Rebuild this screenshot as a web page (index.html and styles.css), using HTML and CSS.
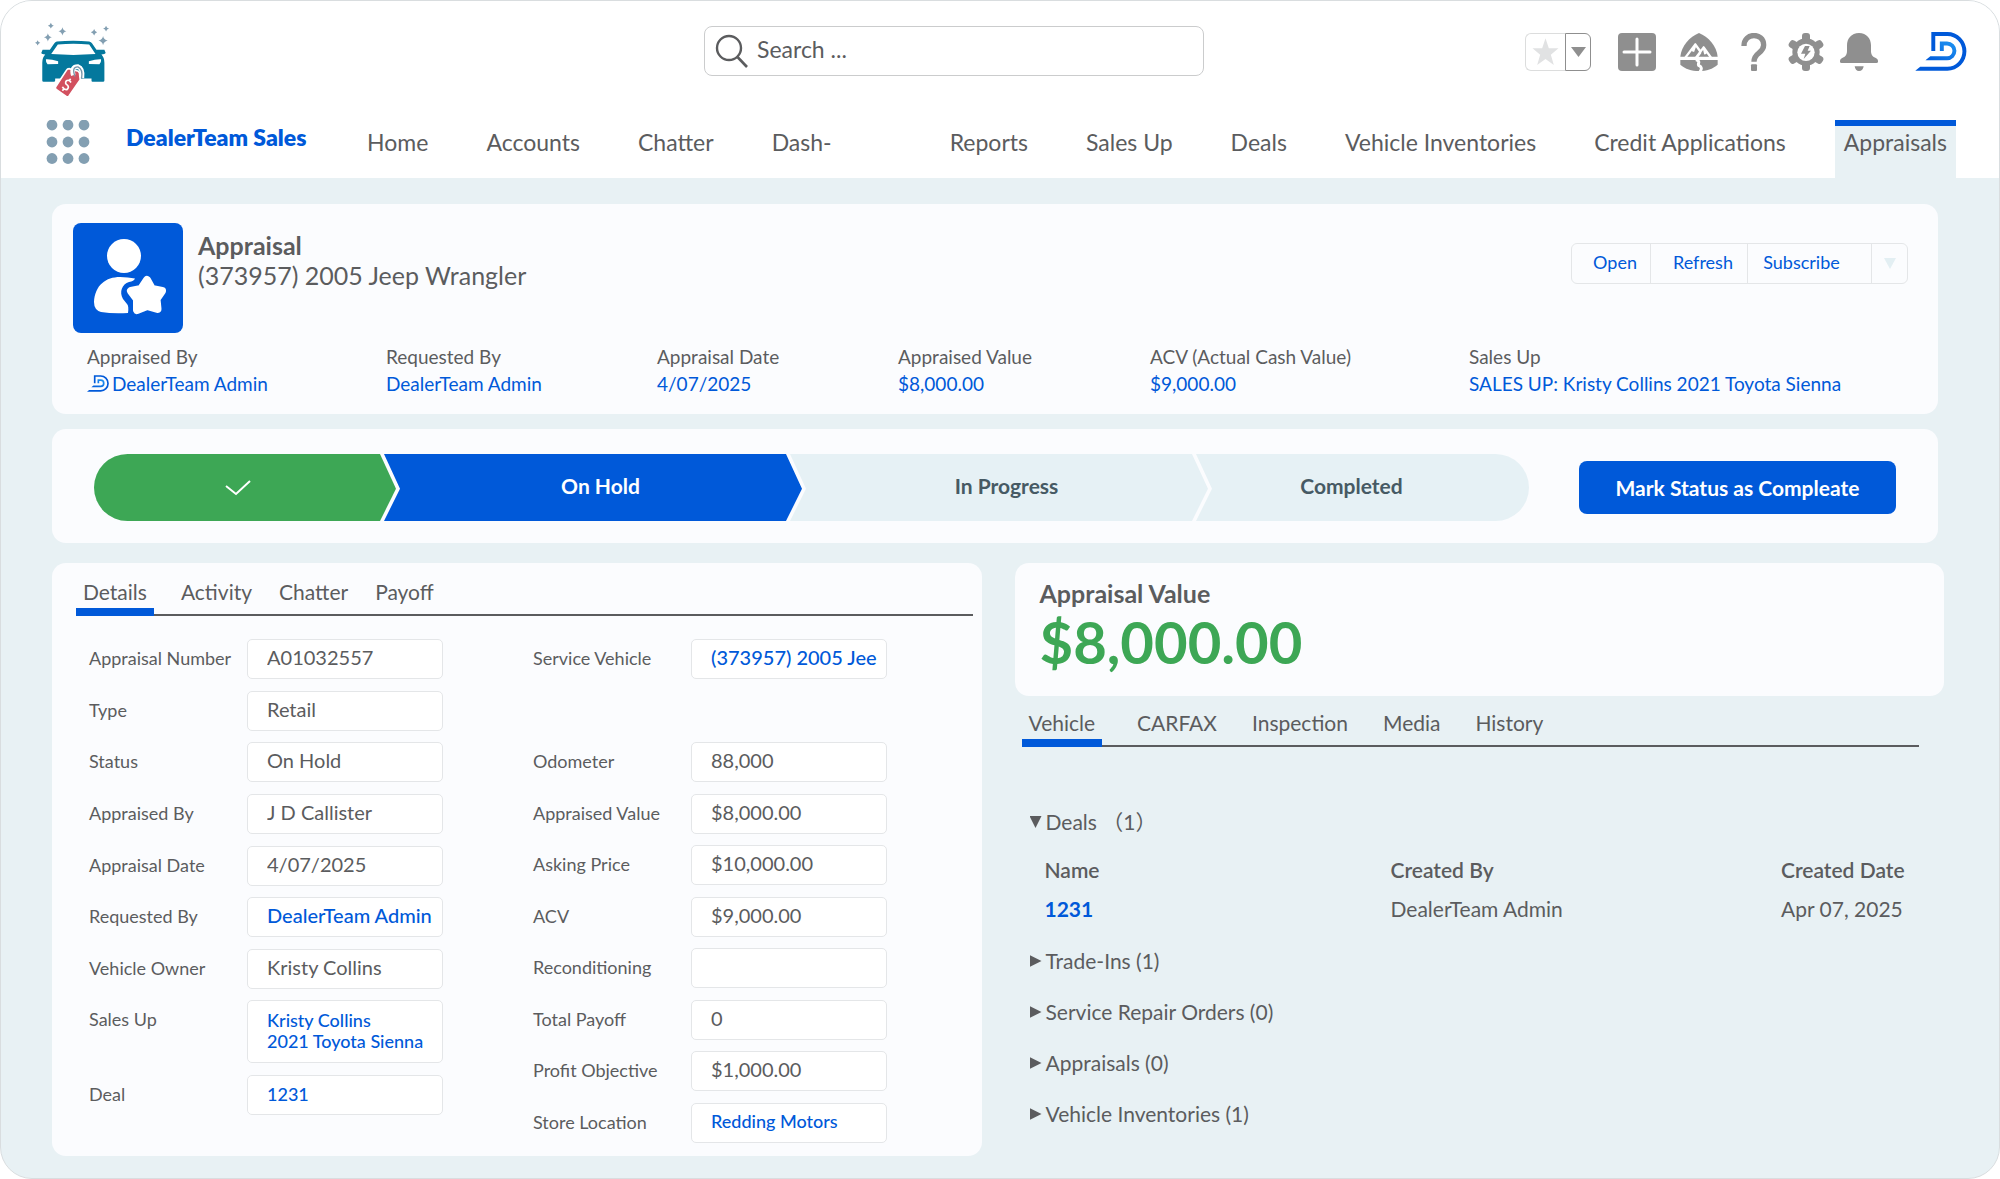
FILE: index.html
```html
<!DOCTYPE html>
<html lang="en">
<head>
<meta charset="utf-8">
<meta name="viewport" content="width=device-width, initial-scale=1">
<title>Appraisal | DealerTeam Sales</title>
<link rel="stylesheet" href="styles.css">
</head>
<body>
<svg class="sprite" aria-hidden="true">
  <defs>
    <linearGradient id="brand-fade" x1="0" y1="1" x2="1" y2="0">
      <stop offset="0" stop-color="#0059d9"/>
      <stop offset="1" stop-color="#2196f3"/>
    </linearGradient>
    <symbol id="brand-d" viewBox="1215 35 157 119">
      <path fill="#0059d9" d="M1264 93V35H1313A58 59 0 0 1 1313 153H1215L1230 141H1313A46 47 0 0 0 1313 47H1276V93Z"/>
      <path fill="url(#brand-fade)" d="M1290 93V64H1312A28 28 0 0 1 1312 121H1246L1261 109H1312A16 16 0 0 0 1312 76H1302V93Z"/>
    </symbol>
  </defs>
</svg>

<div class="app">
  <header class="topbar">
    <div class="topbar-main">
      <a class="logo" href="#" aria-label="DealerTeam home">
        <svg viewBox="42 35 230 230" width="76" height="76">
          <g fill="#839fb2">
            <path d="M125 51Q127 61 137 63Q127 65 125 76Q123 65 113 63Q123 61 125 51Z"/>
            <path d="M81 69Q83 79 93 81Q83 83 81 94Q79 83 69 81Q79 79 81 69Z"/>
            <path d="M248 77Q250 88 262 91Q250 94 248 105Q246 94 234 91Q246 88 248 77Z"/>
            <path d="M90 37Q92 44 99 46Q92 48 90 55Q88 48 81 46Q88 44 90 37Z"/>
            <path d="M50 90Q52 97 58 98Q52 100 50 106Q48 100 42 98Q48 97 50 90Z"/>
            <path d="M221 56Q223 64 230 66Q223 68 221 76Q219 68 211 66Q219 64 221 56Z"/>
            <path d="M257 46Q259 53 266 55Q259 57 257 64Q255 57 248 55Q255 53 257 46Z"/>
          </g>
          <path fill="#04789d" fill-rule="evenodd" d="M108 94Q158 90 206 94Q212 95 215 100L228 119H252L256 129Q254 133 243 133Q252 142 252 158V212Q252 216 248 216H216Q213 216 213 212V206H103V212Q103 216 99 216H68Q64 216 64 212V158Q64 142 73 133Q62 133 61 129L65 119H87L100 100Q103 95 108 94ZM111 103L91 132Q158 137 225 132L206 103Q158 99 111 103ZM75 148Q90 147 112 154V162L80 163Q74 156 75 148ZM242 148Q227 147 205 154V162L237 163Q243 156 242 148Z"/>
          <path fill="#d2505f" stroke="#fff" stroke-width="5" d="M138 180Q140 176 145 176L173 184Q178 188 177 194L179 210L145 259Q140 264 135 259L106 239Q102 235 105 230Z"/>
          <path fill="none" stroke="#fff" stroke-width="14" d="M158 196Q150 170 172 170Q188 176 184 204"/>
          <path fill="none" stroke="#7795a8" stroke-width="4" d="M163 200Q152 170 172 171Q188 178 183 206"/>
          <path fill="none" stroke="#fff" stroke-width="5" d="M151 218Q145 208 137 213Q131 221 140 226Q147 233 138 240Q129 240 125 231M150 207L145 212M129 238L125 243"/>
        </svg>
      </a>

      <form class="search" role="search">
        <svg viewBox="0 0 34 34" width="34" height="34" fill="none" stroke="#5b5c5e" aria-hidden="true">
          <circle cx="14" cy="14" r="12" stroke-width="2.4"/>
          <path d="M22.500 23L32 33" stroke-width="2.600"/>
        </svg>
        <input type="search" placeholder="Search ..." aria-label="Search">
      </form>

      <div class="tools">
        <div class="favorites">
          <button type="button" class="fav-star" aria-label="Favorite this page">
            <svg viewBox="68 54 80 84" width="27" height="28"><path fill="#e1e2e3" d="M108 55L118 85H147L124 104L133 135L108 117L83 135L92 104L69 85H98Z"/></svg>
          </button>
          <button type="button" class="fav-list" aria-label="Favorites list">
            <svg viewBox="0 0 15 10" width="15" height="10"><path fill="#8f8f8f" d="M0 0H15L7.500 10Z"/></svg>
          </button>
        </div>
        <button type="button" class="tool tool-add" aria-label="Add">
          <svg viewBox="0 0 38 38" width="38" height="38"><rect width="38" height="38" rx="4" fill="#8f8f8f"/><path stroke="#fff" stroke-width="3" stroke-linecap="round" d="M19 6V32M6 19H32"/></svg>
        </button>
        <button type="button" class="tool tool-trail" aria-label="Guidance center">
          <svg viewBox="510 39 114 114" width="38" height="38">
            <path fill="#8f8f8f" d="M511 110C514 78 539 50 567 39C595 50 620 78 623 110Z"/>
            <path fill="#8f8f8f" d="M511 120H623V134C608 147 590 153 567 153C544 153 526 147 511 134Z"/>
            <path fill="none" stroke="#fff" stroke-width="7" stroke-linejoin="round" d="M526 113L556 73L570 93M558 113L581 82L603 113M581 82L586 103M556 76L549 95M572 96L560 113"/>
            <path fill="none" stroke="#fff" stroke-width="9" d="M558 119C574 126 562 128 566 136C578 142 574 148 570 156"/>
          </svg>
        </button>
        <button type="button" class="tool tool-help" aria-label="Help">
          <svg viewBox="692 41 78 114" width="26" height="38"><path fill="none" stroke="#8f8f8f" stroke-width="16" d="M701 80C701 38 760 39 760 77C760 103 731 98 731 127"/><rect x="722" y="135" width="18" height="20" rx="3" fill="#8f8f8f"/></svg>
        </button>
        <button type="button" class="tool tool-setup" aria-label="Setup">
          <svg viewBox="834 39 108 114" width="36" height="38">
            <g fill="#8f8f8f">
              <circle cx="888" cy="96" r="41"/>
              <rect x="876" y="39" width="24" height="114" rx="9"/>
              <rect x="876" y="39" width="24" height="114" rx="9" transform="rotate(60 888 96)"/>
              <rect x="876" y="39" width="24" height="114" rx="9" transform="rotate(120 888 96)"/>
            </g>
            <circle cx="888" cy="97" r="26" fill="#fff"/>
            <path fill="#8f8f8f" d="M885 78H899L893 92H903L881 117L886 101H873Z"/>
          </svg>
        </button>
        <button type="button" class="tool tool-bell" aria-label="Notifications">
          <svg viewBox="990 39 114 114" width="38" height="38"><path fill="#8f8f8f" d="M1047 39C1070 39 1083 56 1083 76V92C1083 104 1087 109 1096 113Q1104 116 1104 122V125Q1104 129 1099 129H995Q990 129 990 125V122Q990 116 998 113C1007 109 1011 104 1011 92V76C1011 56 1024 39 1047 39ZM1034 139H1061Q1059 153 1047 153Q1036 153 1034 139Z"/></svg>
        </button>
        <button type="button" class="tool" aria-label="User profile">
          <svg width="52" height="39"><use href="#brand-d"/></svg>
        </button>
      </div>
    </div>

    <nav class="nav" aria-label="Main">
      <button type="button" class="launcher" aria-label="App launcher">
        <svg viewBox="0 0 44 44" width="44" height="44" fill="#839fb2">
          <circle cx="6" cy="5" r="5.400"/><circle cx="22" cy="5" r="5.400"/><circle cx="38" cy="5" r="5.400"/>
          <circle cx="6" cy="22" r="5.400"/><circle cx="22" cy="22" r="5.400"/><circle cx="38" cy="22" r="5.400"/>
          <circle cx="6" cy="38.500" r="5.400"/><circle cx="22" cy="38.500" r="5.400"/><circle cx="38" cy="38.500" r="5.400"/>
        </svg>
      </button>
      <a class="brand" href="#">DealerTeam Sales</a>
      <div class="nav-links">
        <a href="#">Home</a>
        <a href="#">Accounts</a>
        <a href="#">Chatter</a>
        <a href="#" class="nav-wide">Dash-</a>
        <a href="#">Reports</a>
        <a href="#">Sales Up</a>
        <a href="#">Deals</a>
        <a href="#">Vehicle Inventories</a>
        <a href="#">Credit Applications</a>
        <a href="#" class="active" aria-current="page">Appraisals</a>
      </div>
    </nav>
  </header>

  <main class="content">
    <section class="card record">
      <div class="record-head">
        <div class="record-icon">
          <svg viewBox="0 0 110 110" width="110" height="110" fill="#fff" aria-hidden="true">
            <circle cx="51" cy="33" r="17"/>
            <path d="M47 54Q55 54 62 55.500Q61 58 56 59C49 61 46 69 50 76L54 81Q56 83 55 90Q40 91 28 89Q21 87 21 79C22 62 33 54 47 54Z"/>
            <path stroke="#fff" stroke-width="8" stroke-linejoin="round" d="M74 57L79 66L89 68L83.500 76L84.500 86L74 83L64 87L64 76L58 68L68 66Z"/>
          </svg>
        </div>
        <div class="record-title">
          <h1>Appraisal</h1>
          <p>(373957) 2005 Jeep Wrangler</p>
        </div>
        <div class="record-actions">
          <button type="button">Open</button>
          <button type="button">Refresh</button>
          <button type="button">Subscribe</button>
          <button type="button" class="more" aria-label="More actions"><svg viewBox="0 0 12 11" width="12" height="11"><path fill="#e3eff3" d="M0 0H12L6 11Z"/></svg></button>
        </div>
      </div>
      <dl class="highlights">
        <div><dt>Appraised By</dt><dd><a href="#"><svg width="22" height="17" aria-hidden="true"><use href="#brand-d"/></svg>DealerTeam Admin</a></dd></div>
        <div><dt>Requested By</dt><dd><a href="#">DealerTeam Admin</a></dd></div>
        <div><dt>Appraisal Date</dt><dd>4/07/2025</dd></div>
        <div><dt>Appraised Value</dt><dd>$8,000.00</dd></div>
        <div><dt>ACV (Actual Cash Value)</dt><dd>$9,000.00</dd></div>
        <div><dt>Sales Up</dt><dd><a href="#">SALES UP: Kristy Collins 2021 Toyota Sienna</a></dd></div>
      </dl>
    </section>

    <section class="card status">
      <ol class="path">
        <li class="step done" aria-label="Complete"><svg viewBox="0 0 26 16" width="26" height="16"><path fill="none" stroke="#fff" stroke-width="2" d="M1 6L11 14L25 1"/></svg></li>
        <li class="step current">On Hold</li>
        <li class="step">In Progress</li>
        <li class="step last">Completed</li>
      </ol>
      <button type="button" class="primary">Mark Status as Compleate</button>
    </section>

    <div class="columns">
      <section class="card details">
        <div class="tabs" role="tablist">
          <button type="button" role="tab" aria-selected="true">Details</button>
          <button type="button" role="tab">Activity</button>
          <button type="button" role="tab">Chatter</button>
          <button type="button" role="tab">Payoff</button>
        </div>
        <form class="fields">
          <div class="field-col">
            <div class="field"><label for="number">Appraisal Number</label><input id="number" value="A01032557"></div>
            <div class="field"><label for="type">Type</label><input id="type" value="Retail"></div>
            <div class="field"><label for="status">Status</label><input id="status" value="On Hold"></div>
            <div class="field"><label for="appraiser">Appraised By</label><input id="appraiser" value="J D Callister"></div>
            <div class="field"><label for="date">Appraisal Date</label><input id="date" value="4/07/2025"></div>
            <div class="field"><span class="label">Requested By</span><a class="box" href="#">DealerTeam Admin</a></div>
            <div class="field"><label for="owner">Vehicle Owner</label><input id="owner" value="Kristy Collins"></div>
            <div class="field tall"><span class="label">Sales Up</span><a class="box small" href="#">Kristy Collins<br>2021 Toyota Sienna</a></div>
            <div class="field"><span class="label">Deal</span><a class="box small" href="#">1231</a></div>
          </div>
          <div class="field-col right">
            <div class="field"><span class="label">Service Vehicle</span><a class="box" href="#">(373957) 2005 Jee</a></div>
            <div class="field"></div>
            <div class="field"><label for="odometer">Odometer</label><input id="odometer" value="88,000"></div>
            <div class="field"><label for="value">Appraised Value</label><input id="value" value="$8,000.00"></div>
            <div class="field"><label for="asking">Asking Price</label><input id="asking" value="$10,000.00"></div>
            <div class="field"><label for="acv">ACV</label><input id="acv" value="$9,000.00"></div>
            <div class="field"><label for="recon">Reconditioning</label><input id="recon" value=""></div>
            <div class="field"><label for="payoff">Total Payoff</label><input id="payoff" value="0"></div>
            <div class="field"><label for="profit">Profit Objective</label><input id="profit" value="$1,000.00"></div>
            <div class="field"><span class="label">Store Location</span><a class="box small" href="#">Redding Motors</a></div>
          </div>
        </form>
      </section>

      <div class="side">
        <section class="card value">
          <h2>Appraisal Value</h2>
          <p>$8,000.00</p>
        </section>
        <div class="tabs side-tabs" role="tablist">
          <button type="button" role="tab" aria-selected="true">Vehicle</button>
          <button type="button" role="tab">CARFAX</button>
          <button type="button" role="tab">Inspection</button>
          <button type="button" role="tab">Media</button>
          <button type="button" role="tab">History</button>
        </div>
        <div class="related">
          <details open>
            <summary>Deals （1）</summary>
            <table>
              <thead><tr><th>Name</th><th>Created By</th><th>Created Date</th></tr></thead>
              <tbody><tr><td><a href="#">1231</a></td><td>DealerTeam Admin</td><td>Apr 07, 2025</td></tr></tbody>
            </table>
          </details>
          <details><summary>Trade-Ins (1)</summary></details>
          <details><summary>Service Repair Orders (0)</summary></details>
          <details><summary>Appraisals (0)</summary></details>
          <details><summary>Vehicle Inventories (1)</summary></details>
        </div>
      </div>
    </div>
  </main>
</div>
</body>
</html>
```
FILE: styles.css
```css
:root {
  --ink: #5b5c5e;
  --blue: #0059d9;
  --green: #3da755;
  --mist: #e8f1f4;
  --card: #fbfcfe;
  --line: #e4e6e8;
  --icon: #8f8f8f;
}

* {
  box-sizing: border-box;
}

body,
h1,
h2,
p,
dl,
dd,
ol {
  margin: 0;
  padding: 0;
}

body {
  background: #fff;
  color: var(--ink);
  font-family: Lato, "Noto Sans CJK SC", sans-serif;
  font-size: 21px;
  line-height: 28px;
}

a {
  color: inherit;
  text-decoration: none;
}

button,
input {
  font: inherit;
  color: inherit;
}

button {
  margin: 0;
  padding: 0;
  border: 0;
  background: none;
  cursor: pointer;
}

svg {
  display: block;
}

.sprite {
  position: absolute;
  width: 0;
  height: 0;
}

.app {
  min-height: 100vh;
  border: 1px solid #d9dddf;
  border-radius: 32px;
  background: var(--mist);
  overflow: hidden;
}

/* Header */

.topbar {
  background: #fff;
  font-size: 23px;
}

.topbar-main {
  display: grid;
  grid-template-columns: 669fr 500px 763fr;
  align-items: center;
  height: 101px;
  padding: 0 32px 0 34px;
}

.logo {
  padding-top: 16px;
}

.search {
  display: flex;
  align-items: center;
  gap: 8px;
  height: 50px;
  margin-bottom: 2px;
  padding: 0 10px;
  border: 1px solid #cbcccd;
  border-radius: 8px;
}

.search input {
  flex: 1;
  min-width: 0;
  padding: 0 0 3px;
  border: 0;
  outline: 0;
  background: none;
}

.search input::placeholder {
  color: var(--ink);
  opacity: 1;
}

.tools {
  display: flex;
  align-items: center;
  justify-content: flex-end;
}

.tool {
  margin-left: 23px;
}

.tool-add {
  margin-left: 27px;
}

.tool-trail {
  margin-left: 24px;
}

.tool-setup {
  margin-left: 21px;
}

.tool-bell {
  margin-left: 16px;
}

.tool:last-child {
  margin-left: 37px;
}

.favorites {
  display: flex;
  height: 38px;
}

.fav-star,
.fav-list {
  display: grid;
  place-items: center;
}

.fav-star {
  width: 40px;
  border: 1px solid #dcdddd;
  border-right: 0;
  border-radius: 6px 0 0 6px;
}

.fav-list {
  width: 26px;
  border: 1px solid var(--icon);
  border-radius: 0 6px 6px 0;
}

.nav {
  display: flex;
  align-items: flex-start;
  height: 76px;
  padding: 18px 43px 0 45px;
}

.launcher {
  margin-right: 36px;
}

.brand {
  padding-top: 3px;
  color: var(--blue);
  font-weight: 800;
}

.nav-links {
  display: flex;
  flex: 1;
  justify-content: flex-end;
  gap: 40px;
  white-space: nowrap;
}

.nav-links a {
  height: 58px;
  padding: 2px 9px 0;
  border-top: 6px solid transparent;
}

.nav-links .nav-wide {
  width: 138px;
}

.nav-links .active {
  border-color: var(--blue);
  background: var(--mist);
}

/* Record header */

.content {
  padding: 26px 55px 22px 51px;
}

.card {
  border-radius: 14px;
  background: var(--card);
}

.record {
  margin-right: 6px;
  padding: 19px 30px 17px 21px;
}

.record-head {
  display: flex;
  align-items: flex-start;
}

.record-icon {
  margin-right: 15px;
  border-radius: 8px;
  background: var(--blue);
}

.record-title {
  flex: 1;
  padding-top: 7px;
  font-size: 25px;
  line-height: 30px;
}

.record-title h1,
.value h2 {
  font-size: 25px;
  font-weight: 700;
  line-height: 30px;
}

.record-actions {
  display: flex;
  height: 41px;
  margin-top: 20px;
  border: 1px solid var(--line);
  border-radius: 6px;
  color: var(--blue);
  font-size: 18px;
}

.record-actions button {
  width: 97px;
  padding-bottom: 4px;
  border-left: 1px solid var(--line);
}

.record-actions button:first-child {
  width: 78px;
  padding-left: 8px;
  border-left: 0;
}

.record-actions button:nth-child(2) {
  padding-left: 8px;
}

.record-actions button:nth-child(3) {
  width: 124px;
  padding-right: 16px;
}

.record-actions .more {
  display: grid;
  place-items: center;
  width: 36px;
  padding: 0;
}

.highlights {
  display: grid;
  grid-template-columns: 299fr 271fr 241fr 252fr 319fr 439fr;
  padding-top: 10px;
  padding-left: 14px;
  font-size: 19px;
  line-height: 27px;
  white-space: nowrap;
}

.highlights dd {
  color: var(--blue);
}

.highlights a {
  display: flex;
  align-items: center;
  gap: 3px;
}

/* Status path */

.status {
  display: flex;
  align-items: center;
  gap: 50px;
  margin: 15px 6px 0 0;
  padding: 25px 42px 22px;
}

.path {
  display: grid;
  flex: 1;
  grid-template-columns: 302fr 406fr 406fr 321fr;
  height: 67px;
  border-radius: 34px;
  overflow: hidden;
  list-style: none;
  font-weight: 700;
}

.step {
  display: grid;
  place-items: center;
  margin-left: -12px;
  padding: 0 0 4px 15px;
  background: #e6f1f5;
  color: #465a64;
  clip-path: polygon(0 0, calc(100% - 16px) 0, 100% 52%, calc(100% - 16px) 100%, 0 100%, 16px 52%);
}

.step.done {
  margin-left: 0;
  padding: 0 15px 0 0;
  background: var(--green);
  clip-path: polygon(0 0, calc(100% - 16px) 0, 100% 52%, calc(100% - 16px) 100%, 0 100%);
}

.step.current {
  background: var(--blue);
  color: #fff;
}

.step.last {
  padding: 0 22px 4px 0;
  clip-path: polygon(0 0, 100% 0, 100% 100%, 0 100%, 16px 52%);
}

.primary {
  width: 317px;
  height: 53px;
  border-radius: 8px;
  background: var(--blue);
  color: #fff;
  font-weight: 700;
}

/* Two columns */

.columns {
  display: grid;
  grid-template-columns: 1fr 1fr;
  gap: 33px;
  margin-top: 20px;
}

.tabs {
  display: flex;
  gap: 27px;
  border-bottom: 2px solid var(--ink);
}

.tabs button {
  height: 36px;
  padding-bottom: 8px;
  border-bottom: 0 solid var(--blue);
}

.tabs [aria-selected="true"] {
  height: 38px;
  margin-bottom: -2px;
  padding: 0 7px 2px;
  border-bottom-width: 8px;
}

.details {
  padding: 15px 9px 13px 24px;
}

.fields {
  display: flex;
  gap: 90px;
  padding: 23px 0 0 13px;
}

.field-col {
  display: flex;
  flex-direction: column;
  justify-content: space-between;
  min-height: 476px;
  align-self: flex-start;
}

.field-col.right {
  min-height: 504px;
}

.field {
  display: grid;
  grid-template-columns: 158px 196px;
  align-items: center;
  min-height: 40px;
  font-size: 18px;
}

.field label,
.field .label {
  padding-bottom: 2px;
}

.field input,
.box {
  width: 100%;
  height: 40px;
  padding: 0 0 4px 19px;
  border: 1px solid var(--line);
  border-radius: 5px;
  background: #fff;
  outline: 0;
  font-size: 20px;
}

.box {
  display: flex;
  align-items: center;
  color: var(--blue);
  font-weight: 500;
  white-space: nowrap;
}

.box.small {
  padding-bottom: 2px;
  font-size: 18px;
  line-height: 21px;
}

.tall {
  align-items: start;
}

.tall .label {
  padding-top: 5px;
}

.tall .box {
  height: 63px;
}

.value {
  padding: 15px 25px 24px;
}

.value p {
  margin-top: 4px;
  color: var(--green);
  font-size: 58px;
  font-weight: 700;
  line-height: 60px;
}

.side-tabs {
  gap: 35px;
  margin: 13px 25px 0 7px;
}

.related {
  display: flex;
  flex-direction: column;
  gap: 21px;
  padding: 60px 25px 0 15px;
}

.related [open] {
  margin-bottom: -3px;
}

.related summary {
  display: flex;
  align-items: center;
  gap: 4px;
  line-height: 30px;
  list-style: none;
  cursor: pointer;
}

.related summary::before {
  content: "";
  width: 12px;
  height: 12px;
  background: var(--ink);
  clip-path: polygon(0 0, 100% 50%, 0 100%);
}

.related [open] summary::before {
  clip-path: polygon(0 0, 100% 0, 50% 100%);
}

.related table {
  width: 100%;
  margin-top: 13px;
  padding-left: 15px;
  border-spacing: 0;
  table-layout: fixed;
}

.related th,
.related td {
  height: 39px;
  padding: 0;
  text-align: left;
}

.related th {
  font-weight: 600;
}

.related th:first-child {
  width: 346px;
}

.related th:last-child {
  width: 138px;
}

.related td a {
  color: var(--blue);
  font-weight: 700;
}
```
